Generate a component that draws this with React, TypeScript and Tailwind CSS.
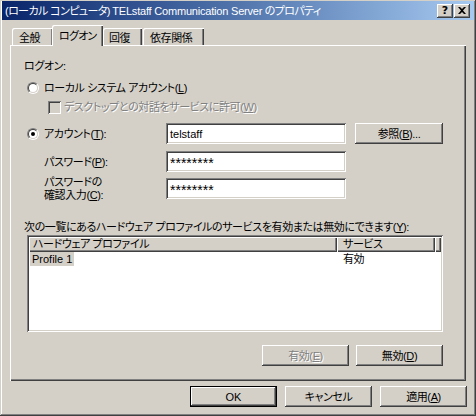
import React from "react";

const raised =
  "shadow-[inset_-1px_-1px_#404040,inset_1px_1px_#fff,inset_-2px_-2px_#808080,inset_2px_2px_#d4d0c8]";
const sunken =
  "shadow-[inset_1px_1px_#808080,inset_-1px_-1px_#fff,inset_2px_2px_#404040,inset_-2px_-2px_#d4d0c8]";

function Radio({ checked }: { checked?: boolean }) {
  return (
    <div className="w-[12px] h-[12px] rounded-full border border-t-[#808080] border-l-[#808080] border-b-white border-r-white flex items-center justify-center shrink-0">
      <div className="w-[10px] h-[10px] rounded-full border border-t-[#404040] border-l-[#404040] border-b-[#d4d0c8] border-r-[#d4d0c8] bg-white flex items-center justify-center">
        {checked && <div className="w-[4px] h-[4px] rounded-full bg-black" />}
      </div>
    </div>
  );
}

function Button({
  children,
  disabled,
  isDefault,
  className,
}: {
  children: React.ReactNode;
  disabled?: boolean;
  isDefault?: boolean;
  className?: string;
}) {
  const inner = (
    <div
      className={
        "w-full h-full flex items-center justify-center " +
        raised +
        (disabled ? " text-[#808080] [text-shadow:1px_1px_#fff]" : " text-black")
      }
    >
      {children}
    </div>
  );
  return (
    <div className={"shrink-0 " + (className ?? "")}>
      {isDefault ? <div className="w-full h-full border border-black">{inner}</div> : inner}
    </div>
  );
}

function Field({ value, mask }: { value: string; mask?: boolean }) {
  return (
    <div className={"w-[180px] h-[21px] bg-white flex items-center pl-[4px] shrink-0 " + sunken}>
      {mask ? (
        <span className="tracking-normal text-[14px] leading-[14px] pt-[3px] text-black">{value}</span>
      ) : (
        <span className="tracking-normal">{value}</span>
      )}
    </div>
  );
}

export default function App() {
  return (
    <div className="w-[476px] h-[416px] bg-[#d4d0c8] flex flex-col text-[11px] leading-[14px] tracking-[-0.4px] text-black [font-family:'Liberation_Sans','Noto_Sans_CJK_JP',sans-serif] [font-feature-settings:'palt'] shadow-[inset_-1px_-1px_#404040,inset_1px_1px_#d4d0c8,inset_-2px_-2px_#808080,inset_2px_2px_#fff]">
      {/* Title bar */}
      <div className="mx-[2px] mt-[1px] h-[19px] flex items-center bg-linear-to-r from-[#0a246a] to-[#a6caf0] pl-[3px] pr-[4px]">
        <span className="flex-1 text-white whitespace-nowrap tracking-[-0.6px]">
          (ローカル コンピュータ) <span className="tracking-[-0.2px]">TELstaff Communication Server</span> のプロパティ
        </span>
        <div className="flex gap-[1px]">
          <div className={"w-[16px] h-[14px] bg-[#d4d0c8] flex items-center justify-center " + raised}>
            <span className="font-bold text-[11px] leading-[11px] tracking-normal [font-family:'DejaVu_Sans',sans-serif]">?</span>
          </div>
          <div className={"w-[16px] h-[14px] bg-[#d4d0c8] flex items-center justify-center " + raised}>
            <svg width="8" height="7" viewBox="0 0 8 7">
              <path d="M0 0h2l2 2 2-2h2L5 3.5 8 7H6L4 5 2 7H0l3-3.5z" fill="#000" />
            </svg>
          </div>
        </div>
      </div>

      {/* Tabs + panel */}
      <div className="mx-[10px] mt-[5px] flex flex-col">
        <div className="flex items-end h-[21px] pl-[2px]">
          <div className="w-[41px] h-[18px] shadow-[inset_1px_1px_#fff,inset_-1px_0_#404040,inset_-2px_0_#808080] rounded-tl-[2px] pl-[7px] pt-[3px] whitespace-nowrap">
            全般
          </div>
          <div className="relative z-10 -ml-[1px] w-[51px] h-[21px] bg-[#d4d0c8] shadow-[inset_1px_1px_#fff,inset_-1px_0_#404040,inset_-2px_0_#808080] rounded-tl-[2px] pl-[7px] pt-[4px] whitespace-nowrap tracking-[-0.8px]">
            ログオン
          </div>
          <div className="w-[39px] h-[18px] shadow-[inset_1px_1px_#fff,inset_-1px_0_#404040,inset_-2px_0_#808080] rounded-tl-[2px] pl-[6px] pt-[3px] whitespace-nowrap">
            回復
          </div>
          <div className="ml-[1px] w-[61px] h-[18px] shadow-[inset_1px_1px_#fff,inset_-1px_0_#404040,inset_-2px_0_#808080] rounded-tl-[2px] pl-[7px] pt-[3px] whitespace-nowrap">
            依存関係
          </div>
        </div>

        <div className="-mt-[1px] h-[336px] shadow-[inset_1px_1px_#fff,inset_-1px_-1px_#404040,inset_-2px_-2px_#808080] flex flex-col pl-[14px] pt-[14px]">
          <div className="h-[14px]">ログオン:</div>

          <div className="mt-[8px] h-[14px] flex items-center pl-[3px]">
            <Radio />
            <span className="ml-[5px]">
              ローカル システム アカウント(<u>L</u>)
            </span>
          </div>

          <div className="mt-[5px] h-[14px] flex items-center pl-[24px]">
            <div className={"w-[13px] h-[13px] bg-[#d4d0c8] shrink-0 " + sunken} />
            <span className="ml-[3px] text-[#808080] [text-shadow:1px_1px_#fff]">
              デスクトップとの対話をサービスに許可(<u>W</u>)
            </span>
          </div>

          <div className="mt-[9px] h-[21px] flex items-center">
            <div className="w-[142px] flex items-center pl-[3px]">
              <Radio checked />
              <span className="ml-[5px]">
                アカウント(<u>T</u>):
              </span>
            </div>
            <Field value="telstaff" />
            <Button className="ml-[9px] w-[88px] h-[21px]">
              参照(<u>B</u>)...
            </Button>
          </div>

          <div className="mt-[7px] h-[21px] flex items-center">
            <div className="w-[142px] pl-[20px]">
              パスワード(<u>P</u>):
            </div>
            <Field value="********" mask />
          </div>

          <div className="mt-[6px] h-[21px] flex items-center">
            <div className="w-[142px] pl-[20px] leading-[13px]">
              パスワードの
              <br />
              確認入力(<u>C</u>):
            </div>
            <Field value="********" mask />
          </div>

          <div className="mt-[21px] h-[14px] whitespace-nowrap">
            次の一覧にあるハードウェア プロファイルのサービスを有効または無効にできます(<u>Y</u>):
          </div>

          <div className={"mt-[1px] ml-[3px] w-[416px] h-[97px] bg-white p-[2px] flex flex-col " + sunken}>
            <div className="h-[15px] flex bg-[#d4d0c8]">
              <div className="w-[308px] h-full shadow-[inset_1px_1px_#fff,inset_-1px_-1px_#404040,inset_-2px_-2px_#808080] pl-[4px] leading-[15px] whitespace-nowrap">
                ハードウェア プロファイル
              </div>
              <div className="w-[98px] h-full shadow-[inset_1px_1px_#fff,inset_-1px_-1px_#404040,inset_-2px_-2px_#808080] pl-[6px] leading-[15px] whitespace-nowrap">
                サービス
              </div>
              <div className="flex-1 h-full shadow-[inset_1px_1px_#fff,inset_-1px_-1px_#404040,inset_-2px_-2px_#808080]" />
            </div>
            <div className="h-[14px] flex">
              <div className="w-[308px] pl-[1px]">
                <span className="bg-[#d4d0c8] px-[2px] inline-block h-[14px] tracking-normal">Profile 1</span>
              </div>
              <div className="pl-[6px]">有効</div>
            </div>
          </div>

          <div className="mt-[13px] ml-[3px] w-[416px] flex justify-end gap-[7px]">
            <Button disabled className="w-[87px] h-[21px]">
              有効(<u>E</u>)
            </Button>
            <Button className="w-[87px] h-[21px]">
              無効(<u>D</u>)
            </Button>
          </div>
        </div>
      </div>

      {/* Bottom buttons */}
      <div className="mt-[5px] flex justify-end gap-[8px] pr-[9px]">
        <Button isDefault className="w-[87px] h-[21px]">
          <span className="tracking-normal">OK</span>
        </Button>
        <Button className="w-[87px] h-[21px]">キャンセル</Button>
        <Button className="w-[87px] h-[21px]">
          適用(<u>A</u>)
        </Button>
      </div>
    </div>
  );
}
